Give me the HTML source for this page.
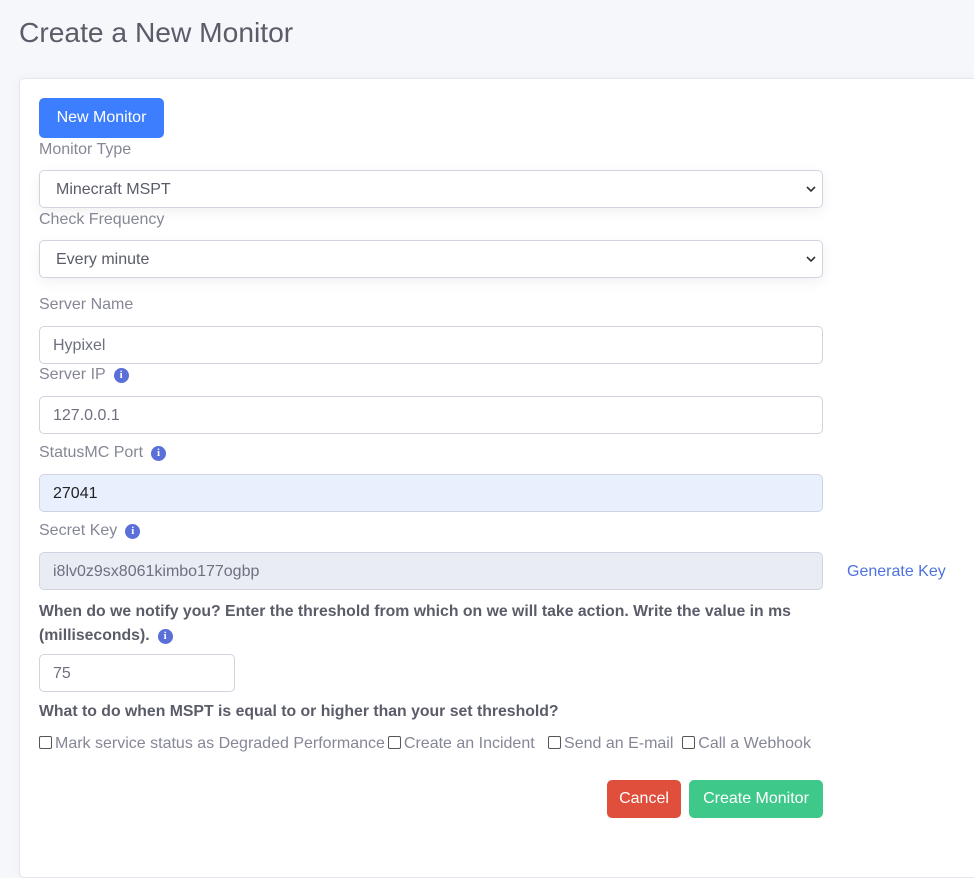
<!DOCTYPE html>
<html><head><meta charset="utf-8"><style>
body{margin:0;width:974px;height:838px;background:#f6f7fb;font-family:"Liberation Sans",sans-serif;position:relative;overflow:hidden;color:#6e707e}
.a{position:absolute}
h1{position:absolute;left:19px;top:16px;margin:0;font-size:28.2px;font-weight:400;color:#5a5c69}
.card{left:19px;top:78px;width:980px;height:800px;background:#fff;border:1px solid #e3e6f0;border-radius:5px;box-sizing:border-box;box-shadow:0 0 12px rgba(0,0,0,.04)}
.lbl{font-size:16px;color:#858796;left:39px}
.inp{left:39px;width:784px;height:38px;box-sizing:border-box;border:1px solid #d1d3e2;border-radius:5px;background:#fff;font-size:16px;color:#6e707e;padding-left:13px;line-height:37px}
.sel{box-shadow:0 4px 14px rgba(0,0,0,.06);padding-left:16px;color:#5a5c69}
.sel svg{position:absolute;right:6px;top:14px}
.i{display:inline-block;width:15px;height:15px;border-radius:50%;background:#5a6fd8;color:#fff;font-size:11px;font-weight:bold;text-align:center;line-height:15px;font-family:"Liberation Serif",serif;vertical-align:1px;margin-left:8px}
.b{font-size:15.8px;font-weight:bold;color:#5a5c69;left:39px}
.btn{color:#fff;font-size:16px;text-align:center;line-height:38px;border-radius:5px}
.cb{display:inline-block;width:11px;height:11px;border:1px solid #555;border-radius:2px;vertical-align:-1px;margin-right:3px}
</style></head><body>
<h1>Create a New Monitor</h1>
<div class="a card"></div>
<div class="a btn" style="left:39px;top:98px;width:125px;height:40px;line-height:40px;background:#3d7eff">New Monitor</div>
<div class="a lbl" style="top:141px">Monitor Type</div>
<div class="a inp sel" style="top:170px">Minecraft MSPT<svg width="10" height="8" viewBox="0 0 10 8"><path d="M1 2l4 4 4-4" stroke="#333" stroke-width="1.6" fill="none"/></svg></div>
<div class="a lbl" style="top:211px">Check Frequency</div>
<div class="a inp sel" style="top:240px">Every minute<svg width="10" height="8" viewBox="0 0 10 8"><path d="M1 2l4 4 4-4" stroke="#333" stroke-width="1.6" fill="none"/></svg></div>
<div class="a lbl" style="top:296px">Server Name</div>
<div class="a inp" style="top:326px">Hypixel</div>
<div class="a lbl" style="top:366px">Server IP<span class="i">i</span></div>
<div class="a inp" style="top:396px">127.0.0.1</div>
<div class="a lbl" style="top:444px">StatusMC Port<span class="i">i</span></div>
<div class="a inp" style="top:474px;background:#e8f0fe;color:#222">27041</div>
<div class="a lbl" style="top:522px">Secret Key<span class="i">i</span></div>
<div class="a inp" style="top:552px;background:#eaecf4">i8lv0z9sx8061kimbo177ogbp</div>
<div class="a" style="left:847px;top:563px;font-size:16px;color:#4e73df">Generate Key</div>
<div class="a b" style="top:600px;line-height:24px;width:790px">When do we notify you? Enter the threshold from which on we will take action. Write the value in ms (milliseconds).<span class="i">i</span></div>
<div class="a inp" style="top:654px;width:196px">75</div>
<div class="a b" style="top:703px">What to do when MSPT is equal to or higher than your set threshold?</div>
<div class="a" style="left:39px;top:735px;font-size:16px;color:#858796;white-space:nowrap"><span class="cb"></span>Mark service status as Degraded Performance<span class="cb" style="margin-left:3px"></span>Create an Incident &nbsp; <span class="cb"></span>Send an E-mail &nbsp;<span class="cb"></span>Call a Webhook</div>
<div class="a btn" style="left:607px;top:780px;width:74px;height:38px;background:#e04e3c">Cancel</div>
<div class="a btn" style="left:689px;top:780px;width:134px;height:38px;background:#3ec98a">Create Monitor</div>
</body></html>
